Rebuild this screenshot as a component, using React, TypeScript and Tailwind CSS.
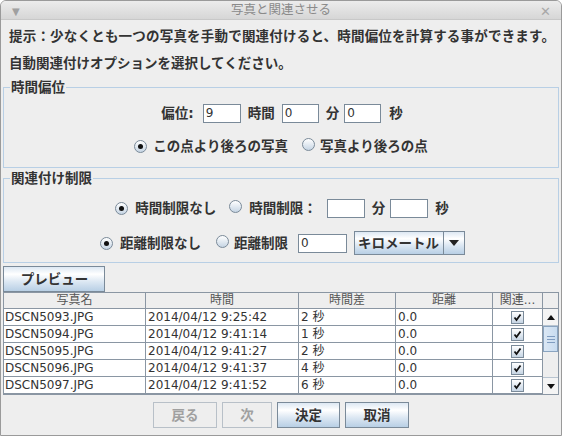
import React from "react";

const rows = [
  { name: "DSCN5093.JPG", time: "2014/04/12 9:25:42", diff: "2 秒" },
  { name: "DSCN5094.JPG", time: "2014/04/12 9:41:14", diff: "1 秒" },
  { name: "DSCN5095.JPG", time: "2014/04/12 9:41:27", diff: "2 秒" },
  { name: "DSCN5096.JPG", time: "2014/04/12 9:41:37", diff: "4 秒" },
  { name: "DSCN5097.JPG", time: "2014/04/12 9:41:52", diff: "6 秒" },
  { name: "", time: "", diff: "" },
];

function Radio({ checked }: { checked?: boolean }) {
  return (
    <span className="inline-flex h-[13px] w-[13px] shrink-0 items-center justify-center rounded-full border border-[#7a8a99] bg-[linear-gradient(to_bottom,#ffffff,#c6d5e4)]">
      {checked && <span className="h-[5px] w-[5px] rounded-full bg-[#111]" />}
    </span>
  );
}

function Field({ value, w }: { value: string; w: string }) {
  return (
    <div
      className={`h-[19px] ${w} border border-[#7a8a99] bg-white pl-[2px] text-[12px] font-normal leading-[17px] text-[#333]`}
    >
      {value}
    </div>
  );
}

function Check() {
  return (
    <span className="inline-flex h-[13px] w-[13px] items-center justify-center border border-[#7a8a99] bg-[linear-gradient(to_bottom,#ffffff,#c6d5e4)]">
      <svg width="9" height="9" viewBox="0 0 9 9">
        <path d="M1.5 4.5 L3.5 7 L7.5 1.5" stroke="#111" strokeWidth="1.8" fill="none" />
      </svg>
    </span>
  );
}

const btn =
  "flex items-center justify-center border border-[#7a8a99] bg-[linear-gradient(to_bottom,#dde8f3_0%,#ffffff_30%,#dde8f3_60%,#b8cfe5_100%)] text-[13.5px] font-bold text-[#333]";
const btnOff =
  "flex items-center justify-center border border-[#b8c0c8] bg-[#eeeeee] text-[13.5px] font-bold text-[#a0a0a0]";

export default function App() {
  return (
    <div className="flex h-[436px] w-[562px] flex-col overflow-hidden rounded-t-[6px] border border-[#9a9a9a] bg-[#eeeeee] font-['DejaVu_Sans','Noto_Sans_CJK_JP',sans-serif] text-[#333]">
      {/* title bar */}
      <div className="relative flex h-[19px] shrink-0 items-center justify-center border-b border-[#c8c8c8] bg-[linear-gradient(to_bottom,#ececec,#d6d6d6)] text-[12.5px] text-[#8a8a8a]">
        <span className="absolute left-[11px] top-[3px] text-[10px] text-[#a0a0a0]">▼</span>
        写真と関連させる
        <span className="absolute right-[10px] top-[1px] text-[13px] text-[#a8a8a8]">✕</span>
      </div>

      <div className="flex flex-col px-[2px]">
        <p className="mt-[8px] pl-[6px] text-[13.5px] font-bold leading-[17px] tracking-[0.2px]">
          提示：少なくとも一つの写真を手動で関連付けると、時間偏位を計算する事ができます。
        </p>
        <p className="mt-[10px] pl-[6px] text-[13.5px] font-bold leading-[17px]">
          自動関連付けオプションを選択してください。
        </p>

        <fieldset className="mt-[7px] border border-[#b8cfe5] pb-[12px]">
          <legend className="ml-[6px] px-[1px] text-[13.5px] font-bold leading-[17px]">時間偏位</legend>
          <div className="mt-[8px] flex items-center justify-center pl-[2px] text-[13.5px] font-bold leading-[17px]">
            <span>偏位:</span>
            <span className="ml-[9px]"><Field value="9" w="w-[38px]" /></span>
            <span className="ml-[7px]">時間</span>
            <span className="ml-[7px]"><Field value="0" w="w-[37px]" /></span>
            <span className="ml-[7px]">分</span>
            <span className="ml-[5px]"><Field value="0" w="w-[37px]" /></span>
            <span className="ml-[8px]">秒</span>
          </div>
          <div className="mt-[15px] flex items-center justify-center text-[13.5px] font-bold leading-[17px]">
            <Radio checked />
            <span className="ml-[6px]">この点より後ろの写真</span>
            <span className="ml-[14px]"><Radio /></span>
            <span className="ml-[5px]">写真より後ろの点</span>
          </div>
        </fieldset>

        <fieldset className="mt-[2px] border border-[#b8cfe5] pb-[7px]">
          <legend className="ml-[6px] px-[1px] text-[13.5px] font-bold leading-[17px]">関連付け制限</legend>
          <div className="mt-[12px] flex items-center justify-center pl-[2px] text-[13.5px] font-bold leading-[17px]">
            <Radio checked />
            <span className="ml-[7px]">時間制限なし</span>
            <span className="ml-[13px]"><Radio /></span>
            <span className="ml-[7px]">時間制限：</span>
            <span className="ml-[10px]"><Field value="" w="w-[38px]" /></span>
            <span className="ml-[7px]">分</span>
            <span className="ml-[5px]"><Field value="" w="w-[38px]" /></span>
            <span className="ml-[7px]">秒</span>
          </div>
          <div className="mt-[13px] flex items-center justify-center pl-[3px] text-[13.5px] font-bold leading-[17px]">
            <Radio checked />
            <span className="ml-[7px]">距離制限なし</span>
            <span className="ml-[15px]"><Radio /></span>
            <span className="ml-[5px]">距離制限</span>
            <span className="ml-[10px]"><Field value="0" w="w-[49px]" /></span>
            <div className="ml-[7px] flex h-[24px] w-[111px] border border-[#7a8a99] bg-[linear-gradient(to_bottom,#dde8f3_0%,#ffffff_30%,#dde8f3_60%,#b8cfe5_100%)]">
              <span className="flex-1 pl-[3px] leading-[22px]">キロメートル</span>
              <span className="flex w-[21px] items-center justify-center border-l border-[#7a8a99]">
                <svg width="10" height="6" viewBox="0 0 10 6">
                  <path d="M0 0 H10 L5 6 Z" fill="#222" />
                </svg>
              </span>
            </div>
          </div>
        </fieldset>

        <button className={`${btn} mt-[3px] h-[26px] w-[102px] pl-[1px]`}>プレビュー</button>

        {/* table */}
        <div className="flex h-[103px] overflow-hidden border border-[#8a96a3] bg-white text-[12px] leading-[16px]">
          <div className="flex w-[539px] flex-col">
            <div className="flex h-[16px] shrink-0 border-b border-[#8a96a3] bg-[#eeeeee] text-[#555]">
              <div className="w-[142px] border-r border-[#8a96a3] text-center leading-[15px]">写真名</div>
              <div className="w-[153px] border-r border-[#8a96a3] text-center leading-[15px]">時間</div>
              <div className="w-[97px] border-r border-[#8a96a3] text-center leading-[15px]">時間差</div>
              <div className="w-[97px] border-r border-[#8a96a3] text-center leading-[15px]">距離</div>
              <div className="w-[50px] border-r border-[#8a96a3] text-center leading-[15px]">関連...</div>
            </div>
            {rows.map((r, i) => (
              <div key={i} className="flex h-[17px] shrink-0 border-b border-[#8a96a3] text-[#333]">
                <div className="w-[142px] border-r border-[#8a96a3] pl-[1px]">{r.name}</div>
                <div className="w-[153px] border-r border-[#8a96a3] pl-[2px]">{r.time}</div>
                <div className="w-[97px] border-r border-[#8a96a3] pl-[2px]">{r.diff}</div>
                <div className="w-[97px] border-r border-[#8a96a3] pl-[2px]">{r.name ? "0.0" : ""}</div>
                <div className="flex w-[50px] items-center justify-center border-r border-[#8a96a3]">
                  <Check />
                </div>
              </div>
            ))}
          </div>
          <div className="flex w-[15px] flex-col bg-[#eeeeee]">
            <div className="h-[16px] shrink-0 border-b border-[#8a96a3]" />
            <div className="flex h-[17px] shrink-0 items-center justify-center border-b border-[#b8c4d0] bg-[#f4f4f4]">
              <svg width="8" height="5" viewBox="0 0 8 5">
                <path d="M0 5 H8 L4 0 Z" fill="#111" />
              </svg>
            </div>
            <div className="flex h-[26px] shrink-0 flex-col items-center justify-center gap-[2px] border border-[#8aa4c0] bg-[linear-gradient(to_right,#dbe7f4,#c8dcf0)]">
              <span className="h-px w-[8px] bg-[#7f9cc0]" />
              <span className="h-px w-[8px] bg-[#7f9cc0]" />
              <span className="h-px w-[8px] bg-[#7f9cc0]" />
            </div>
            <div className="flex-1" />
            <div className="flex h-[17px] shrink-0 items-center justify-center border-t border-[#b8c4d0] bg-[#f4f4f4]">
              <svg width="8" height="5" viewBox="0 0 8 5">
                <path d="M0 0 H8 L4 5 Z" fill="#111" />
              </svg>
            </div>
          </div>
        </div>

        <div className="mt-[7px] flex justify-center gap-[5px]">
          <button className={`${btnOff} h-[26px] w-[64px]`}>戻る</button>
          <button className={`${btnOff} h-[26px] w-[50px]`}>次</button>
          <button className={`${btn} h-[26px] w-[63px]`}>決定</button>
          <button className={`${btn} h-[26px] w-[64px]`}>取消</button>
        </div>
      </div>
    </div>
  );
}
